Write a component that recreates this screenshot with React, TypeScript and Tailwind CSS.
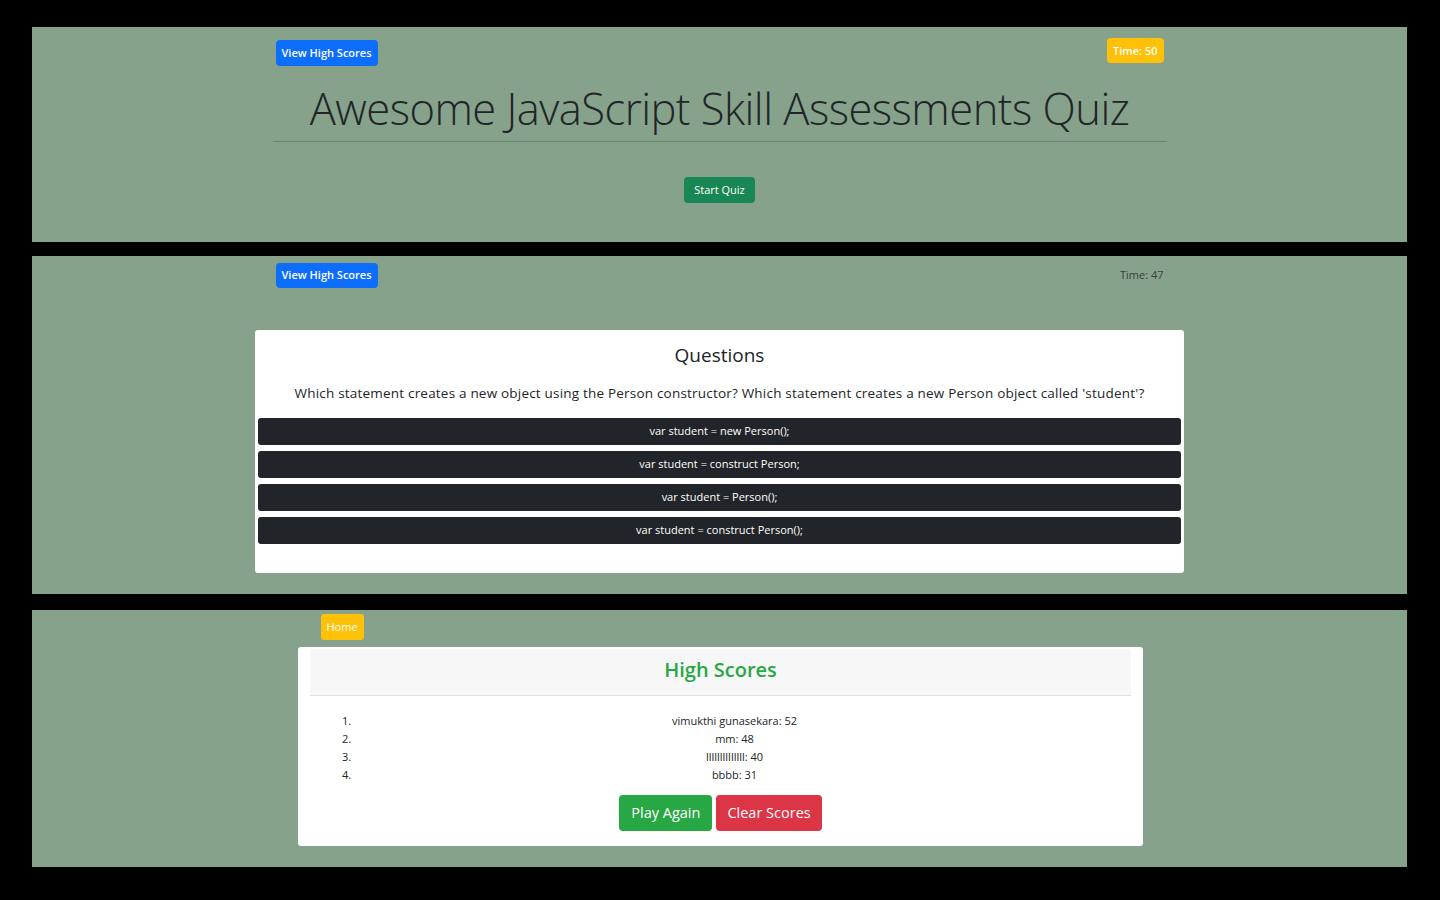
import { FC } from 'react';

const font = { fontFamily: '"Open Sans", "Noto Sans", sans-serif' };

const answers = [
  'var student = new Person();',
  'var student = construct Person;',
  'var student = Person();',
  'var student = construct Person();',
];

const scores = [
  'vimukthi gunasekara: 52',
  'mm: 48',
  'llllllllllllll: 40',
  'bbbb: 31',
];

const StartPanel: FC = () => (
  <section className="ml-8 mr-[33px] h-[215px] bg-[#86a28b]">
    <div className="mx-auto w-[894px] pt-[11px]">
      <div className="flex items-start justify-between px-[3px]">
        <button className="mt-[2px] h-[26px] rounded-[4px] bg-[#0d6efd] px-[6px] text-[11px] font-semibold text-white">
          View High Scores
        </button>
        <span className="h-[25px] rounded-[4px] bg-[#ffc107] px-[6px] text-[11px] leading-[25px] font-semibold text-white">
          Time: 50
        </span>
      </div>
      <h1 className="mt-[15px] text-center text-[43.5px] leading-[56px] font-light tracking-[-0.5px] text-[#212529]">
        Awesome JavaScript Skill Assessments Quiz
      </h1>
      <hr className="mt-[4px] border-t border-[#6b8670]" />
      <div className="mt-[35px] flex justify-center">
        <button className="h-[26px] rounded-[4px] bg-[#198754] px-[10px] text-[11px] text-white">
          Start Quiz
        </button>
      </div>
    </div>
  </section>
);

const QuestionPanel: FC = () => (
  <section className="ml-8 mr-[33px] mt-[14px] h-[338px] bg-[#86a28b]">
    <div className="mx-auto w-[894px] pt-[7px]">
      <div className="flex items-center justify-between px-[3px]">
        <button className="h-[25px] rounded-[4px] bg-[#0d6efd] px-[6px] text-[11px] font-semibold text-white">
          View High Scores
        </button>
        <span className="text-[11px] text-[#3a3f3b]">Time: 47</span>
      </div>
    </div>
    <div className="mx-auto mt-[42px] w-[929px] rounded-[3px] bg-white px-[3px] pt-[12px] pb-[29px]">
      <h2 className="text-center text-[19px] leading-[26px] font-medium text-[#212529]">Questions</h2>
      <p className="mt-[13px] text-center text-[13.5px] leading-[24px] font-medium tracking-[0.2px] text-[#212529]">
        Which statement creates a new object using the Person constructor? Which statement creates a new Person object called 'student'?
      </p>
      <div className="mt-[13px] flex flex-col gap-[6px]">
        {answers.map((a) => (
          <button
            key={a}
            className="h-[27px] w-full rounded-[3px] bg-[#212529] text-center text-[11px] text-white"
          >
            {a}
          </button>
        ))}
      </div>
    </div>
  </section>
);

const ScoresPanel: FC = () => (
  <section className="ml-8 mr-[33px] mt-[16px] h-[257px] bg-[#86a28b]">
    <div className="mx-auto w-[844px] pt-[3px]">
      <button className="ml-[23px] h-[26px] rounded-[3px] bg-[#ffc107] px-[6px] text-[11px] text-white">
        Home
      </button>
    </div>
    <div className="mx-auto mt-[7px] w-[845px] translate-x-[1px] rounded-[3px] bg-white px-[12px] pt-[2px] pb-[15px]">
      <div className="flex h-[47px] items-center justify-center border-b border-[#dee2e6] bg-[#f7f7f7] pb-[4px]">
        <h3 className="text-[20px] font-semibold text-[#28a745]">High Scores</h3>
      </div>
      <ol className="mt-[16px] pl-[32px] text-[11px] leading-[18px] text-[#212529]">
        {scores.map((s, i) => (
          <li key={s} className="flex">
            <span className="w-[20px]">{i + 1}.</span>
            <span className="flex-1 pr-[24px] text-center">{s}</span>
          </li>
        ))}
      </ol>
      <div className="mt-[11px] flex justify-center gap-[4px]">
        <button className="h-[36px] rounded-[4px] bg-[#28a745] px-[12px] text-[14.5px] text-white">
          Play Again
        </button>
        <button className="h-[36px] rounded-[4px] bg-[#dc3545] px-[11px] text-[14.5px] text-white">
          Clear Scores
        </button>
      </div>
    </div>
  </section>
);

export default function App() {
  return (
    <div className="min-h-[900px] w-[1440px] bg-black pt-[27px]" style={font}>
      <StartPanel />
      <QuestionPanel />
      <ScoresPanel />
    </div>
  );
}
